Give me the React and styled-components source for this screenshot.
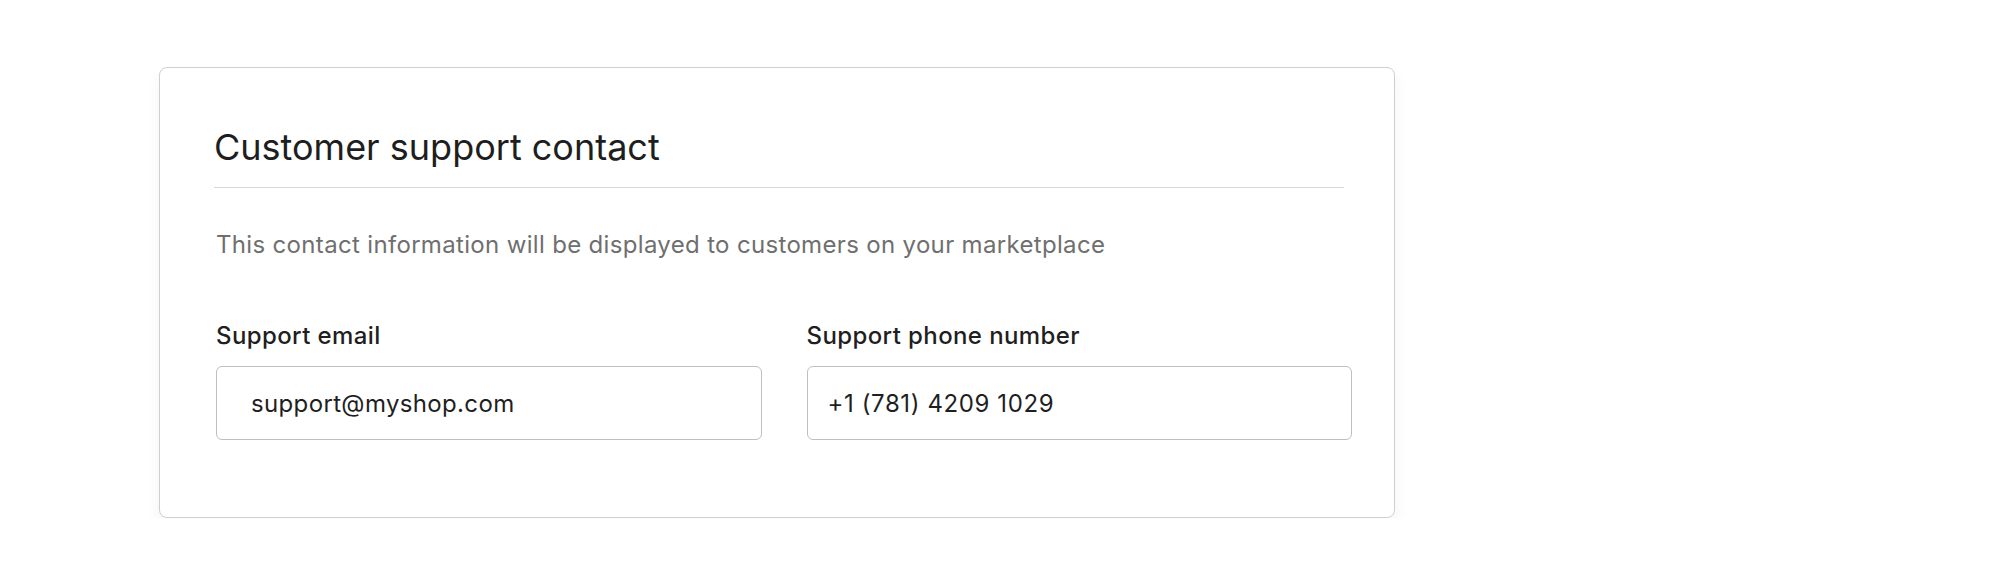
import React from "react";
import styled, { createGlobalStyle } from "styled-components";

const GlobalStyle = createGlobalStyle`
  * { box-sizing: border-box; }
  body {
    margin: 0;
    background: #ffffff;
    font-family: Inter, "Noto Sans", "Liberation Sans", sans-serif;
    color: #1d1d1d;
  }
`;

const Page = styled.div`
  padding: 67px 0 0 159px;
`;

const Card = styled.section`
  width: 1236px;
  height: 451px;
  padding: 58px 42px 0 54px;
  background: #ffffff;
  border: 1px solid #cfcfcf;
  border-radius: 8px;
  box-shadow: 0 8px 16px rgba(0, 0, 0, 0.05);
`;

const Header = styled.div`
  margin-right: 8px;
  padding-bottom: 18px;
  border-bottom: 1px solid #d8d8d8;
`;

const Title = styled.h2`
  margin: 0;
  font-size: 36px;
  line-height: 1.2;
  font-weight: 400;
  color: #1e1e1e;
`;

const Description = styled.p`
  margin: 40px 0 0 2px;
  font-size: 24px;
  line-height: 1.4;
  letter-spacing: 0.33px;
  color: #6f6f6f;
`;

const Fields = styled.div`
  margin-top: 57px;
  display: grid;
  grid-template-columns: 1fr 1fr;
  column-gap: 43px;
`;

const Field = styled.label`
  display: flex;
  flex-direction: column;
  gap: 14px;
  padding-left: 2px;
`;

const Label = styled.span`
  font-size: 24px;
  line-height: 1.4;
  font-weight: 500;
  letter-spacing: 0.4px;
  color: #1f1f1f;
`;

const Input = styled.input`
  width: 100%;
  height: 74px;
  padding: 0 20px 0 ${(p) => p.$indent}px;
  border: 1px solid #bfbfbf;
  border-radius: 6px;
  background: #ffffff;
  font-family: inherit;
  font-size: 24px;
  letter-spacing: ${(p) => p.$spacing}px;
  color: #1f1f1f;
  outline: none;
`;

const fields = [
  { label: "Support email", value: "support@myshop.com", indent: 34, spacing: 0.35 },
  { label: "Support phone number", value: "+1 (781) 4209 1029", indent: 20, spacing: 0.6 },
];

export default function App() {
  return (
    <>
      <GlobalStyle />
      <Page>
        <Card>
          <Header>
            <Title>Customer support contact</Title>
          </Header>
          <Description>
            This contact information will be displayed to customers on your marketplace
          </Description>
          <Fields>
            {fields.map((f) => (
              <Field key={f.label}>
                <Label>{f.label}</Label>
                <Input
                  type="text"
                  defaultValue={f.value}
                  $indent={f.indent}
                  $spacing={f.spacing}
                />
              </Field>
            ))}
          </Fields>
        </Card>
      </Page>
    </>
  );
}
